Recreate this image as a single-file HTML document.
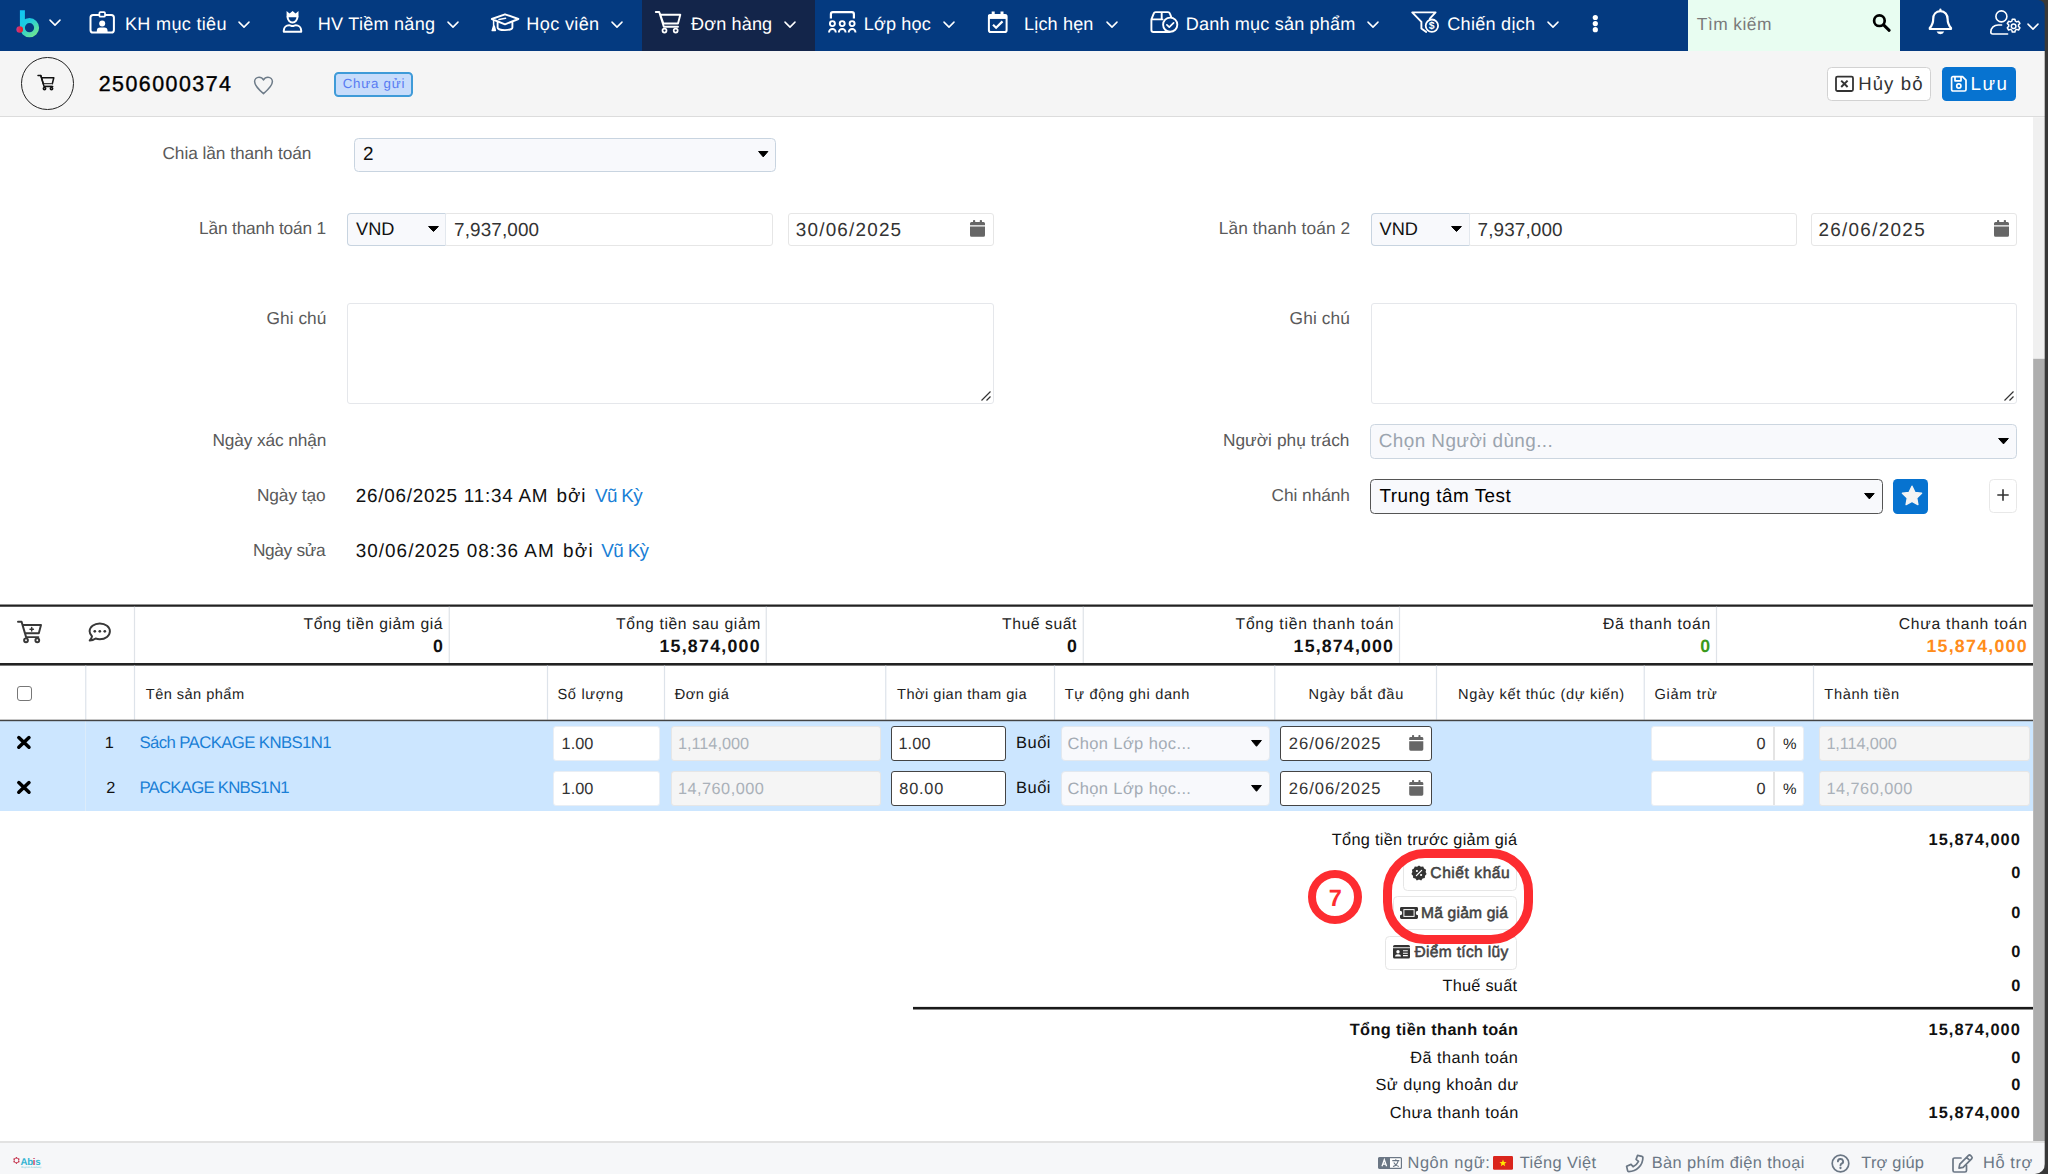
<!DOCTYPE html>
<html lang="vi">
<head>
<meta charset="utf-8">
<title>2506000374</title>
<style>
*{box-sizing:border-box;margin:0;padding:0}
html,body{width:2048px;height:1174px;overflow:hidden;background:#fff}
body{position:relative;font-family:"Liberation Sans",sans-serif;color:#222;-webkit-font-smoothing:antialiased;text-rendering:geometricPrecision}
.a{position:absolute}
.t{position:absolute;white-space:nowrap;line-height:1}
svg{position:absolute;overflow:visible}
/* nav */
#nav{position:absolute;left:0;top:0;width:2045px;height:50.6px;background:#043a80;border-top-right-radius:7px}
#nav .t{color:#fff;font-size:17.6px;top:15.6px;letter-spacing:.3px}
#nav .ch{position:absolute;top:20.7px;width:14px;height:8px}
#navact{position:absolute;left:642px;top:0;width:173px;height:50.6px;background:#13254a}
#search{position:absolute;left:1688px;top:0;width:212px;height:50.6px;background:#e8fdf1}
/* sub header */
#sub{position:absolute;left:0;top:50.6px;width:2045px;height:66.6px;background:#f5f5f5;border-bottom:1.5px solid #dcdcdc}
/* scrollbar + edge */
#sbtrack{position:absolute;left:2033px;top:117px;width:12px;height:1024px;background:#f0f0f0}
#sbthumb{position:absolute;left:2033px;top:358.800px;width:12px;height:782px;background:#aeaeae}
#edge{position:absolute;left:2044.800px;top:0;width:3.200px;height:1174px;background:#383838}
/* footer */
#footer{position:absolute;left:0;top:1141px;width:2045px;height:33px;background:#f6f7f9;border-top:2px solid #e2e2e2;border-bottom-right-radius:10px}
#footer .t{color:#6b7785;font-size:16.6px;top:12.5px}
/* form */
.lbl{color:#555;font-size:16.4px}
.inp{position:absolute;background:#fff;border:1.5px solid #e4e4e4;border-radius:3px}
.sel{position:absolute;background:#f8f9fc;border:1.5px solid #c9d3e0;border-radius:4px}
.val{color:#333;font-size:18px}
</style>
</head>
<body>
<!-- NAV -->
<div class="a" style="left:2030px;top:0;width:18px;height:12px;background:#383838"></div>
<div class="a" style="left:2030px;top:1160px;width:18px;height:14px;background:#383838"></div>
<div id="nav">
<div id="navact"></div>
<div id="search"></div>
<!--NAVITEMS-->
<svg class="ch" style="left:48px;top:19.1px" viewBox="0 0 14 8"><path d="M2 1.1 L7 6.1 L12 1.1" fill="none" stroke="#fff" stroke-width="1.5" stroke-linecap="round" stroke-linejoin="round"/></svg>
<svg class="ch" style="left:237.2px" viewBox="0 0 14 8"><path d="M2 1.1 L7 6.1 L12 1.1" fill="none" stroke="#fff" stroke-width="1.5" stroke-linecap="round" stroke-linejoin="round"/></svg>
<svg class="ch" style="left:445.7px" viewBox="0 0 14 8"><path d="M2 1.1 L7 6.1 L12 1.1" fill="none" stroke="#fff" stroke-width="1.5" stroke-linecap="round" stroke-linejoin="round"/></svg>
<svg class="ch" style="left:610.2px" viewBox="0 0 14 8"><path d="M2 1.1 L7 6.1 L12 1.1" fill="none" stroke="#fff" stroke-width="1.5" stroke-linecap="round" stroke-linejoin="round"/></svg>
<svg class="ch" style="left:783.2px" viewBox="0 0 14 8"><path d="M2 1.1 L7 6.1 L12 1.1" fill="none" stroke="#fff" stroke-width="1.5" stroke-linecap="round" stroke-linejoin="round"/></svg>
<svg class="ch" style="left:942.2px" viewBox="0 0 14 8"><path d="M2 1.1 L7 6.1 L12 1.1" fill="none" stroke="#fff" stroke-width="1.5" stroke-linecap="round" stroke-linejoin="round"/></svg>
<svg class="ch" style="left:1105.2px" viewBox="0 0 14 8"><path d="M2 1.1 L7 6.1 L12 1.1" fill="none" stroke="#fff" stroke-width="1.5" stroke-linecap="round" stroke-linejoin="round"/></svg>
<svg class="ch" style="left:1366.2px" viewBox="0 0 14 8"><path d="M2 1.1 L7 6.1 L12 1.1" fill="none" stroke="#fff" stroke-width="1.5" stroke-linecap="round" stroke-linejoin="round"/></svg>
<svg class="ch" style="left:1546.2px" viewBox="0 0 14 8"><path d="M2 1.1 L7 6.1 L12 1.1" fill="none" stroke="#fff" stroke-width="1.5" stroke-linecap="round" stroke-linejoin="round"/></svg>
<svg class="ch" style="left:2025.5px;top:22.8px" viewBox="0 0 14 8"><path d="M2 1.1 L7 6.1 L12 1.1" fill="none" stroke="#fff" stroke-width="1.5" stroke-linecap="round" stroke-linejoin="round"/></svg>
<!--/NAVITEMS-->
<!--NAVICONS-->
<svg id="navsvg" width="2048" height="51" viewBox="0 0 2048 51" style="left:0;top:0" fill="none" stroke="#fff" stroke-width="2" stroke-linecap="round" stroke-linejoin="round">
<defs>
<linearGradient id="lg1" x1="20" y1="10" x2="40" y2="34" gradientUnits="userSpaceOnUse"><stop offset="0" stop-color="#10c4f4"/><stop offset=".45" stop-color="#1ccbe0"/><stop offset="1" stop-color="#7aea86"/></linearGradient>
<linearGradient id="lg2" x1="16" y1="29" x2="23" y2="29" gradientUnits="userSpaceOnUse"><stop offset="0" stop-color="#c83c90"/><stop offset="1" stop-color="#f01818"/></linearGradient>
</defs>
<!-- logo b -->
<path d="M22.4 10.2 V27.7 A7.1 7.1 0 1 0 29.5 20.6 A7.1 7.1 0 0 0 22.4 27.7" stroke="url(#lg1)" stroke-width="5" stroke-linecap="butt"/>
<circle cx="19.7" cy="29.5" r="3.3" fill="url(#lg2)" stroke="none"/>
<!-- id badge -->
<rect x="90.5" y="15" width="23.4" height="17.6" rx="2.6"/>
<rect x="99.4" y="12.1" width="5.6" height="4.6" rx="1" fill="#043a80" stroke-width="1.7"/>
<circle cx="102.2" cy="23.4" r="3" fill="#fff" stroke="none"/>
<path d="M96.8 32.6 v-1.6 a3.4 3.4 0 0 1 3.4 -3.4 h4 a3.4 3.4 0 0 1 3.4 3.4 v1.6 z" fill="#fff" stroke="none"/>
<!-- user crown -->
<path d="M286.6 11 l3 2.4 l3 -2.4 l3 2.4 l2.9 -2.4 v6.2 h-11.9 z" fill="#fff" stroke="none"/>
<path d="M287.6 17 a4.9 5.4 0 0 0 9.8 0" />
<path d="M283.8 31.8 v-1.2 c0 -3.4 2.6 -5.4 5.4 -5.4 c1.2 0 1.8 .8 3.3 .8 c1.500 0 2.100 -.8 3.300 -.8 c2.800 0 5.400 2 5.400 5.400 v1.200 z"/>
<!-- graduation cap -->
<path d="M505 14.300 L518.400 19 L505 24.300 L491.800 19 Z" stroke-width="1.900"/>
<path d="M497.600 22.400 v5 c0 1.500 3.300 2.700 7.400 2.700 s7.400 -1.200 7.400 -2.700 v-5" stroke-width="1.900"/>
<path d="M499 19.600 l6.600 -1.300" stroke-width="1.500"/>
<path d="M493.600 20 v6 l-1.400 4.600 h3.200 l-1.200 -4.600" stroke-width="1.500" fill="#fff"/>
<!-- cart -->
<path d="M655.800 12 h3.400 l1.100 2.700 M660.300 14.700 h20 l-2.300 8.800 h-14.600 z M659.200 12 l4.600 14.700 h14.200" stroke-width="1.900"/>
<circle cx="664.500" cy="30.600" r="2" stroke-width="1.700"/><circle cx="675.700" cy="30.600" r="2" stroke-width="1.700"/>
<!-- class -->
<path d="M830.900 18.600 v-4.400 a2 2 0 0 1 2 -2 h19 a2 2 0 0 1 2 2 v4.400" stroke-width="2.200" stroke-linecap="butt"/>
<circle cx="832.400" cy="23.600" r="2.500" stroke-width="1.900"/><circle cx="842.200" cy="23.600" r="2.500" stroke-width="1.900"/><circle cx="852.100" cy="23.600" r="2.500" stroke-width="1.900"/>
<path d="M829 32.400 a3.400 3.400 0 0 1 6.800 0 M838.800 32.400 a3.400 3.400 0 0 1 6.800 0 M848.700 32.400 a3.400 3.400 0 0 1 6.800 0" stroke-width="1.900" stroke-linecap="butt"/>
<!-- calendar check -->
<rect x="988.900" y="15" width="17.700" height="17" rx="1.800"/>
<path d="M988.900 15 h17.700 v3.400 h-17.700 z" fill="#fff" stroke-width="1"/>
<path d="M993.200 11.600 v3 M1002 11.600 v3" stroke-width="3" stroke-linecap="butt"/>
<path d="M993 24.800 l3.100 3 l6.400 -6.400" stroke-width="2.200" stroke-linecap="butt" stroke-linejoin="miter"/>
<!-- box check -->
<path d="M1151.400 19.400 l2.400 -6 a2 2 0 0 1 1.800 -1.300 h12.400 a2 2 0 0 1 1.800 1.300 l1.600 4 M1151.400 19.400 v10.600 a2 2 0 0 0 2 2 h16 M1151.400 19.400 h11.200 M1161.700 12.100 v7.300" stroke-width="1.900"/>
<circle cx="1170.200" cy="24.700" r="7.100" stroke-width="1.900" fill="#043a80"/>
<path d="M1166.900 24.900 l2.400 2.300 l4.300 -4.300" stroke-width="1.700"/>
<!-- funnel dollar -->
<path d="M1426.200 32 l-4.800 -3.600 v-6.600 l-9.200 -9.400 h23.400 l-5.800 6.200" stroke-width="1.900"/>
<circle cx="1431.900" cy="25.700" r="6.200" stroke-width="1.800"/>
<!-- dots -->
<circle cx="1595.300" cy="17.500" r="2.600" fill="#fff" stroke="none"/><circle cx="1595.300" cy="23.600" r="2.600" fill="#fff" stroke="none"/><circle cx="1595.300" cy="29.700" r="2.600" fill="#fff" stroke="none"/>
<!-- search -->
<circle cx="1879.400" cy="20.700" r="5.300" stroke="#000" stroke-width="2.700"/>
<path d="M1883.600 24.900 l5.600 5.400" stroke="#000" stroke-width="3" />
<!-- bell -->
<path d="M1940.400 9.600 v1.600 M1940.400 11.200 c-4.600 0 -7.200 3.400 -7.200 7.800 c0 4.600 -1.600 7 -3.400 9 v1 h21.200 v-1 c-1.800 -2 -3.400 -4.400 -3.400 -9 c0 -4.400 -2.600 -7.800 -7.200 -7.800 z" stroke-width="2.200"/>
<path d="M1936.600 31.600 a4 3.800 0 0 0 7.600 0 z" fill="#fff" stroke="none"/>
<!-- user gear -->
<circle cx="2001.400" cy="16.400" r="5.500" stroke-width="1.600"/>
<path d="M2007.600 34 h-14.800 a2 2 0 0 1 -2 -2 c0 -4.400 3.400 -7 7.400 -7 h3.400" stroke-width="1.600"/>
<circle cx="2013.600" cy="26.200" r="2.300" stroke-width="1.500"/>
<path d="M2012.300 19.300 h2.600 l.5 1.900 l1.300 .7 l1.900 -.6 l1.300 2.200 l-1.400 1.400 v1.500 l1.400 1.400 l-1.300 2.200 l-1.900 -.6 l-1.300 .7 l-.5 1.900 h-2.600 l-.5 -1.900 l-1.300 -.7 l-1.900 .6 l-1.300 -2.200 l1.400 -1.400 v-1.500 l-1.400 -1.400 l1.300 -2.200 l1.900 .6 l1.300 -.7 z" stroke-width="1.500"/>
</svg>
<span class="t" style="left:1428.700px;top:20.600px;font-size:10.500px;font-weight:bold;color:#fff;letter-spacing:0">$</span>
<!--/NAVICONS-->
</div>
<!-- SUBHEADER -->
<div id="sub">
<div class="a" id="circ" style="left:21.200px;top:6.200px;width:52.800px;height:52.800px;border:1.800px solid #222;border-radius:50%"></div>
<svg width="20" height="18" viewBox="36 74 20 18" style="left:36px;top:23.400px" fill="none" stroke="#111" stroke-width="1.500" stroke-linejoin="round" stroke-linecap="round">
<path d="M38 75.600 h2.800 l.7 2.200 M41.500 77.800 h12.300 l-1.500 6 h-9 z" />
<path d="M42.900 83.800 h9.400 l-.5 2.200 h-8.300 z" fill="#ccc" stroke="none"/>
<path d="M40.800 75.600 l3.300 11 h8.600" />
<circle cx="44.500" cy="88.600" r="1.200"/><circle cx="51.500" cy="88.600" r="1.200"/>
</svg>
<svg width="22" height="20" viewBox="0 0 22 20" style="left:253px;top:24.400px" fill="none" stroke="#6d7b88" stroke-width="1.500" stroke-linejoin="round"><path d="M10.500 18.600 C4 13.200 1.600 10 1.600 6.600 A4.400 4.400 0 0 1 6 2.200 C8 2.200 9.600 3.300 10.500 5 C11.400 3.300 13 2.200 15 2.200 A4.400 4.400 0 0 1 19.400 6.600 C19.400 10 17 13.200 10.500 18.600 Z"/></svg>
<div class="a" id="badge" style="left:334px;top:21.400px;width:79px;height:25px;border:2px solid #3f9bd8;border-radius:4.500px;background:#c7dcfb"></div>
<div class="a" id="btn1" style="left:1827px;top:16.900px;width:104px;height:34px;border:1.500px solid #d2d2d2;border-radius:4.500px;background:#fff"></div>
<svg width="20" height="18" viewBox="0 0 20 18" style="left:1835px;top:24.400px" fill="none" stroke="#333" stroke-width="1.800"><rect x="1" y="1.600" width="17" height="14.400" rx="1.500"/><path d="M6.200 5.600 l6.400 6.400 M12.600 5.600 l-6.400 6.400" stroke-width="2"/></svg>
<div class="a" id="btn2" style="left:1941.500px;top:16.400px;width:74px;height:34.500px;border-radius:4.500px;background:#0773d0"></div>
<svg width="18" height="18" viewBox="0 0 18 18" style="left:1949.500px;top:24.400px" fill="none" stroke="#fff" stroke-width="1.700" stroke-linejoin="round"><path d="M1.600 3 a1.400 1.400 0 0 1 1.400 -1.400 h9.500 l3.500 3.500 v9.500 a1.400 1.400 0 0 1 -1.400 1.400 h-11.600 a1.400 1.400 0 0 1 -1.400 -1.400 z"/><path d="M5 1.800 v4 h6 v-4"/><circle cx="8.800" cy="11" r="2.100"/></svg>
</div>
<!-- CONTENT -->
<div id="content">
<div class="a" style="left:354.00px;top:137.50px;width:422.00px;height:34.25px;background:#f8f9fc;border:1.5px solid #c8d4e0;border-radius:4.5px;"></div>
<svg width="10.5" height="6.2" viewBox="0 0 10.5 6.2" style="left:758.00px;top:151.30px"><path d="M0.6 0.5 H9.9 L5.25 5.9 Z" fill="#000" stroke="#000" stroke-width="1" stroke-linejoin="round"/></svg>
<div class="a" style="left:444.00px;top:212.50px;width:328.50px;height:33.75px;background:#fff;border:1.5px solid #e6e6e6;border-radius:3px;"></div>
<div class="a" style="left:347.00px;top:212.50px;width:99.00px;height:33.75px;background:#f8f9fc;border:1.5px solid #c8d4e0;border-radius:4px;border-right-color:#e3e8ee;border-top-right-radius:0;border-bottom-right-radius:0;"></div>
<svg width="11" height="5.8" viewBox="0 0 11 5.8" style="left:427.70px;top:226.20px"><path d="M0.6 0.5 H10.4 L5.5 5.5 Z" fill="#000" stroke="#000" stroke-width="1" stroke-linejoin="round"/></svg>
<div class="a" style="left:787.50px;top:212.50px;width:206.00px;height:33.75px;background:#fff;border:1.5px solid #e6e6e6;border-radius:3px;"></div>
<svg width="15" height="16.75" viewBox="0 0 15 16.75" style="left:970.00px;top:220.00px" fill="#666"><path d="M0 6.600 h15 v8.650 a1.500 1.500 0 0 1 -1.500 1.500 h-12 a1.500 1.500 0 0 1 -1.500 -1.500 z M0 5.300 v-1.800 a1.500 1.500 0 0 1 1.500 -1.500 h12 a1.500 1.500 0 0 1 1.500 1.500 v1.800 z"/><rect x="3" y="0" width="2.200" height="4" rx=".8"/><rect x="9.800" y="0" width="2.200" height="4" rx=".8"/></svg>
<div class="a" style="left:347.25px;top:302.50px;width:646.25px;height:101.25px;background:#fff;border:1.5px solid #e5e7eb;border-radius:3px;"></div>
<svg width="12" height="12" viewBox="0 0 12 12" style="left:979.50px;top:389.500px" stroke="#333" stroke-width="1.200" fill="none"><path d="M1.500 10.500 L10.500 1.500 M6.500 10.500 L10.500 6.500"/></svg>
<div class="a" style="left:1467.50px;top:212.50px;width:329.00px;height:33.75px;background:#fff;border:1.5px solid #e6e6e6;border-radius:3px;"></div>
<div class="a" style="left:1370.50px;top:212.50px;width:99.00px;height:33.75px;background:#f8f9fc;border:1.5px solid #c8d4e0;border-radius:4px;border-right-color:#e3e8ee;border-top-right-radius:0;border-bottom-right-radius:0;"></div>
<svg width="11" height="5.8" viewBox="0 0 11 5.8" style="left:1451.20px;top:226.20px"><path d="M0.6 0.5 H10.4 L5.5 5.5 Z" fill="#000" stroke="#000" stroke-width="1" stroke-linejoin="round"/></svg>
<div class="a" style="left:1811.00px;top:212.50px;width:206.00px;height:33.75px;background:#fff;border:1.5px solid #e6e6e6;border-radius:3px;"></div>
<svg width="15" height="16.75" viewBox="0 0 15 16.75" style="left:1993.50px;top:220.00px" fill="#666"><path d="M0 6.600 h15 v8.650 a1.500 1.500 0 0 1 -1.500 1.500 h-12 a1.500 1.500 0 0 1 -1.500 -1.500 z M0 5.300 v-1.800 a1.500 1.500 0 0 1 1.500 -1.500 h12 a1.500 1.500 0 0 1 1.500 1.500 v1.800 z"/><rect x="3" y="0" width="2.200" height="4" rx=".8"/><rect x="9.800" y="0" width="2.200" height="4" rx=".8"/></svg>
<div class="a" style="left:1370.75px;top:302.50px;width:646.25px;height:101.25px;background:#fff;border:1.5px solid #e5e7eb;border-radius:3px;"></div>
<svg width="12" height="12" viewBox="0 0 12 12" style="left:2003.00px;top:389.500px" stroke="#333" stroke-width="1.200" fill="none"><path d="M1.500 10.500 L10.500 1.500 M6.500 10.500 L10.500 6.500"/></svg>
<div class="a" style="left:1370.00px;top:424.25px;width:647.00px;height:34.25px;background:#f8f9fc;border:1.5px solid #ccd6e0;border-radius:4.5px;"></div>
<svg width="11" height="6.2" viewBox="0 0 11 6.2" style="left:1997.80px;top:438.20px"><path d="M0.6 0.5 H10.4 L5.5 5.9 Z" fill="#000" stroke="#000" stroke-width="1" stroke-linejoin="round"/></svg>
<div class="a" style="left:1370.00px;top:478.50px;width:513.00px;height:35.00px;background:#f8f9fc;border:1.5px solid #555;border-radius:4.5px;"></div>
<svg width="10.8" height="6.2" viewBox="0 0 10.8 6.2" style="left:1864.00px;top:492.60px"><path d="M0.6 0.5 H10.200000000000001 L5.4 5.9 Z" fill="#000" stroke="#000" stroke-width="1" stroke-linejoin="round"/></svg>
<div class="a" style="left:1893.00px;top:478.50px;width:34.60px;height:35.00px;background:#0773d0;border-radius:4.5px;"></div>
<svg width="22" height="21" viewBox="0 0 22 21" style="left:1901px;top:485px"><path d="M11 1.200 L13.900 7.400 L20.600 8.200 L15.700 12.900 L16.900 19.600 L11 16.300 L5.100 19.600 L6.300 12.900 L1.400 8.200 L8.100 7.400 Z" fill="#f4f4f4" stroke="#f4f4f4" stroke-width="1.400" stroke-linejoin="round"/></svg>
<div class="a" style="left:1988.50px;top:479.00px;width:28.50px;height:34.00px;background:#fff;border:1.5px solid #e8e8e8;border-radius:4.5px;"></div>
<svg width="14" height="14" viewBox="0 0 14 14" style="left:1995.600px;top:488.250px" stroke="#333" stroke-width="1.600"><path d="M7 1.300 V12.700 M1.300 7 H12.700"/></svg>
<svg width="26" height="24" viewBox="17 620 26 24" style="left:17px;top:620px" fill="none" stroke="#383838" stroke-width="1.950" stroke-linecap="round" stroke-linejoin="round">
<path d="M18 621.800 h3.600 l.9 3.100 M22.500 624.900 h18.500 l-2.200 8.300 h-13.900 z M21.600 621.800 l4.500 15.300 h12.300"/>
<circle cx="26" cy="640.300" r="1.900"/><circle cx="37.300" cy="640.300" r="1.900"/>
<path d="M31.700 627.500 v3.400 M30 629.200 h3.400" stroke-width="1.500"/></svg>
<svg width="24" height="21" viewBox="88 622 24 21" style="left:88px;top:622px" fill="none" stroke="#383838" stroke-width="1.950" stroke-linejoin="round">
<path d="M99.800 623.400 c5.700 0 10.100 3.500 10.100 7.900 s-4.400 7.900 -10.100 7.900 c-1.500 0 -2.900 -.25 -4.200 -.7 c-1.500 1.100 -3.600 2 -5.900 2 c1.300 -1.300 2.100 -2.800 2.300 -4.200 c-1.500 -1.400 -2.400 -3.100 -2.400 -5 c0 -4.400 4.500 -7.900 10.200 -7.900 z"/>
<circle cx="94.800" cy="631.300" r="1.350" fill="#383838" stroke="none"/><circle cx="99.800" cy="631.300" r="1.350" fill="#383838" stroke="none"/><circle cx="104.800" cy="631.300" r="1.350" fill="#383838" stroke="none"/></svg>
<div class="a" style="left:16.75px;top:685.75px;width:15.00px;height:14.75px;background:#fff;border:1.5px solid #777;border-radius:3px;"></div>
<div class="a" style="left:0.00px;top:721.20px;width:2033.00px;height:89.80px;background:#cce6ff;"></div>
<div class="a" style="left:85.20px;top:721.20px;width:1.20px;height:89.80px;background:#dcecfa;"></div>
<svg width="16" height="15" viewBox="0 0 16 15" style="left:15.900px;top:734.70px" stroke="#000" stroke-width="3.500" stroke-linecap="round"><path d="M2.800 2.600 L13 12.200 M13 2.600 L2.800 12.200"/></svg>
<div class="a" style="left:553.25px;top:726.25px;width:106.75px;height:34.25px;background:#fff;border:1.5px solid #e9eef4;border-radius:3px;"></div>
<div class="a" style="left:670.50px;top:726.25px;width:210.75px;height:34.25px;background:#f5f5f5;border:1.5px solid #e6e6e6;border-radius:3px;"></div>
<div class="a" style="left:891.25px;top:725.75px;width:115.00px;height:35.00px;background:#fff;border:1.5px solid #444;border-radius:3px;"></div>
<div class="a" style="left:1060.50px;top:726.25px;width:209.00px;height:34.25px;background:#f8f9fc;border:1.5px solid #e2e8ef;border-radius:4px;"></div>
<svg width="11" height="6.6" viewBox="0 0 11 6.6" style="left:1251.30px;top:740.00px"><path d="M0.6 0.5 H10.4 L5.5 6.3 Z" fill="#000" stroke="#000" stroke-width="1" stroke-linejoin="round"/></svg>
<div class="a" style="left:1280.00px;top:725.75px;width:151.75px;height:35.00px;background:#fff;border:1.5px solid #444;border-radius:3px;"></div>
<svg width="14.5" height="15.75" viewBox="0 0 15 16.75" style="left:1408.75px;top:735.00px" fill="#666"><path d="M0 6.600 h15 v8.650 a1.500 1.500 0 0 1 -1.500 1.500 h-12 a1.500 1.500 0 0 1 -1.500 -1.500 z M0 5.300 v-1.800 a1.500 1.500 0 0 1 1.500 -1.500 h12 a1.500 1.500 0 0 1 1.500 1.500 v1.800 z"/><rect x="3" y="0" width="2.200" height="4" rx=".8"/><rect x="9.800" y="0" width="2.200" height="4" rx=".8"/></svg>
<div class="a" style="left:1650.50px;top:726.25px;width:153.50px;height:34.25px;background:#fff;border:1.5px solid #e9eef4;border-radius:3px;"></div>
<div class="a" style="left:1773.40px;top:727.25px;width:1.20px;height:32.25px;background:#e4e4e4;"></div>
<div class="a" style="left:1819.00px;top:726.25px;width:210.75px;height:34.25px;background:#f5f5f5;border:1.5px solid #e6e6e6;border-radius:3px;"></div>
<svg width="16" height="15" viewBox="0 0 16 15" style="left:15.900px;top:779.70px" stroke="#000" stroke-width="3.500" stroke-linecap="round"><path d="M2.800 2.600 L13 12.200 M13 2.600 L2.800 12.200"/></svg>
<div class="a" style="left:553.25px;top:771.25px;width:106.75px;height:34.25px;background:#fff;border:1.5px solid #e9eef4;border-radius:3px;"></div>
<div class="a" style="left:670.50px;top:771.25px;width:210.75px;height:34.25px;background:#f5f5f5;border:1.5px solid #e6e6e6;border-radius:3px;"></div>
<div class="a" style="left:891.25px;top:770.75px;width:115.00px;height:35.00px;background:#fff;border:1.5px solid #444;border-radius:3px;"></div>
<div class="a" style="left:1060.50px;top:771.25px;width:209.00px;height:34.25px;background:#f8f9fc;border:1.5px solid #e2e8ef;border-radius:4px;"></div>
<svg width="11" height="6.6" viewBox="0 0 11 6.6" style="left:1251.30px;top:785.00px"><path d="M0.6 0.5 H10.4 L5.5 6.3 Z" fill="#000" stroke="#000" stroke-width="1" stroke-linejoin="round"/></svg>
<div class="a" style="left:1280.00px;top:770.75px;width:151.75px;height:35.00px;background:#fff;border:1.5px solid #444;border-radius:3px;"></div>
<svg width="14.5" height="15.75" viewBox="0 0 15 16.75" style="left:1408.75px;top:780.00px" fill="#666"><path d="M0 6.600 h15 v8.650 a1.500 1.500 0 0 1 -1.500 1.500 h-12 a1.500 1.500 0 0 1 -1.500 -1.500 z M0 5.300 v-1.800 a1.500 1.500 0 0 1 1.500 -1.500 h12 a1.500 1.500 0 0 1 1.500 1.500 v1.800 z"/><rect x="3" y="0" width="2.200" height="4" rx=".8"/><rect x="9.800" y="0" width="2.200" height="4" rx=".8"/></svg>
<div class="a" style="left:1650.50px;top:771.25px;width:153.50px;height:34.25px;background:#fff;border:1.5px solid #e9eef4;border-radius:3px;"></div>
<div class="a" style="left:1773.40px;top:772.25px;width:1.20px;height:32.25px;background:#e4e4e4;"></div>
<div class="a" style="left:1819.00px;top:771.25px;width:210.75px;height:34.25px;background:#f5f5f5;border:1.5px solid #e6e6e6;border-radius:3px;"></div>
<div class="a" style="left:1403.00px;top:856.00px;width:114.00px;height:34.50px;background:#fff;border:1.5px solid #e6e6e6;border-radius:4.5px;"></div>
<div class="a" style="left:1392.70px;top:895.60px;width:124.30px;height:34.40px;background:#fff;border:1.5px solid #e6e6e6;border-radius:4.5px;"></div>
<div class="a" style="left:1384.70px;top:936.00px;width:132.30px;height:33.60px;background:#fff;border:1.5px solid #e6e6e6;border-radius:4.5px;"></div>
<svg width="16" height="16" viewBox="0 0 16 16" style="left:1410.800px;top:865.400px"><path d="M8 .4 l1.900 1.300 l2.300 -.2 l.9 2.100 l2 1.100 l-.5 2.300 l1 2.100 l-1.600 1.600 l-.2 2.300 l-2.200 .6 l-1.400 1.800 l-2.200 -.8 l-2.200 .8 l-1.400 -1.800 l-2.200 -.6 l-.2 -2.300 l-1.600 -1.600 l1 -2.100 l-.5 -2.300 l2 -1.100 l.9 -2.100 l2.300 .2 z" fill="#333"/><path d="M5.400 10.600 L10.600 5.400" stroke="#fff" stroke-width="1.300" stroke-linecap="round"/><circle cx="5.900" cy="6" r="1.100" fill="#fff"/><circle cx="10.100" cy="10" r="1.100" fill="#fff"/></svg>
<svg width="18" height="12" viewBox="0 0 18 12" style="left:1400.200px;top:906.600px"><path d="M1.400 0 h15.200 a1.400 1.400 0 0 1 1.400 1.400 v2.400 a2.200 2.200 0 0 0 0 4.400 v2.400 a1.400 1.400 0 0 1 -1.400 1.400 h-15.200 a1.400 1.400 0 0 1 -1.400 -1.400 v-2.400 a2.200 2.200 0 0 0 0 -4.400 v-2.400 a1.400 1.400 0 0 1 1.400 -1.400 z" fill="#333"/><rect x="3.900" y="2.600" width="10.200" height="6.800" fill="none" stroke="#fff" stroke-width="1"/></svg>
<svg width="17" height="13.500" viewBox="0 0 17 13.500" style="left:1393px;top:945.200px"><rect x="0" y="0" width="17" height="13.500" rx="1.600" fill="#333"/><rect x="0" y="2.300" width="17" height=".9" fill="#fff"/><circle cx="5" cy="6.700" r="1.700" fill="#fff"/><path d="M2.100 11.600 a2.900 2.400 0 0 1 5.800 0 z" fill="#fff"/><path d="M10 5.800 h4.800 M10 8.200 h4.800 M10 10.600 h4.800" stroke="#fff" stroke-width="1.100"/></svg>
<div class="a" style="left:1308px;top:870px;width:54px;height:54px;border:8.700px solid #fd2c30;border-radius:50%"></div>
<div class="a" style="left:1383.200px;top:849px;width:150px;height:95px;border:9.300px solid #fd2c30;border-radius:42px"></div>
<svg width="2048" height="1174" viewBox="0 0 2048 1174" style="left:0;top:0;pointer-events:none"><rect x="0.00" y="604.50" width="2033.00" height="2.25" fill="#222"/><rect x="0.00" y="663.00" width="2033.00" height="2.60" fill="#222"/><rect x="133.90" y="606.75" width="1.20" height="56.25" fill="#dfe3e8"/><rect x="448.65" y="606.75" width="1.20" height="56.25" fill="#dfe3e8"/><rect x="765.65" y="606.75" width="1.20" height="56.25" fill="#dfe3e8"/><rect x="1082.65" y="606.75" width="1.20" height="56.25" fill="#dfe3e8"/><rect x="1398.90" y="606.75" width="1.20" height="56.25" fill="#dfe3e8"/><rect x="1715.90" y="606.75" width="1.20" height="56.25" fill="#dfe3e8"/><rect x="85.15" y="665.60" width="1.20" height="54.10" fill="#dde3ea"/><rect x="133.90" y="665.60" width="1.20" height="54.10" fill="#dde3ea"/><rect x="546.90" y="665.60" width="1.20" height="54.10" fill="#dde3ea"/><rect x="663.90" y="665.60" width="1.20" height="54.10" fill="#dde3ea"/><rect x="885.15" y="665.60" width="1.20" height="54.10" fill="#dde3ea"/><rect x="1053.90" y="665.60" width="1.20" height="54.10" fill="#dde3ea"/><rect x="1274.15" y="665.60" width="1.20" height="54.10" fill="#dde3ea"/><rect x="1435.90" y="665.60" width="1.20" height="54.10" fill="#dde3ea"/><rect x="1643.65" y="665.60" width="1.20" height="54.10" fill="#dde3ea"/><rect x="1812.90" y="665.60" width="1.20" height="54.10" fill="#dde3ea"/><rect x="0.00" y="719.70" width="2033.00" height="1.50" fill="#444"/><rect x="913.00" y="1006.90" width="1120.00" height="2.60" fill="#1a1a1a"/></svg>
<span class="t" id="nv0" style="left:124.94px;top:14.98px;font-size:18.1px;color:#fff;letter-spacing:0.306px;">KH mục tiêu</span>
<span class="t" id="nv1" style="left:317.70px;top:14.98px;font-size:18.1px;color:#fff;letter-spacing:0.246px;">HV Tiềm năng</span>
<span class="t" id="nv2" style="left:526.36px;top:14.98px;font-size:18.1px;color:#fff;letter-spacing:0.338px;">Học viên</span>
<span class="t" id="nv3" style="left:691.00px;top:14.98px;font-size:18.1px;color:#fff;letter-spacing:0.129px;">Đơn hàng</span>
<span class="t" id="nv4" style="left:863.78px;top:14.98px;font-size:18.1px;color:#fff;letter-spacing:0.120px;">Lớp học</span>
<span class="t" id="nv5" style="left:1024.10px;top:14.98px;font-size:18.1px;color:#fff;letter-spacing:0.129px;">Lịch hẹn</span>
<span class="t" id="nv6" style="left:1185.70px;top:14.98px;font-size:18.1px;color:#fff;letter-spacing:0.169px;">Danh mục sản phẩm</span>
<span class="t" id="nv7" style="left:1447.26px;top:14.98px;font-size:18.1px;color:#fff;letter-spacing:0.260px;">Chiến dịch</span>
<span class="t" id="srch" style="left:1696.84px;top:15.67px;font-size:17.4px;color:#7a7a7a;letter-spacing:0.441px;">Tìm kiếm</span>
<span class="t" id="title" style="left:98.68px;top:74.13px;font-size:21.4px;color:#000;letter-spacing:1.480px;-webkit-text-stroke:.4px #000;">2506000374</span>
<span class="t" id="badget" style="left:342.76px;top:76.94px;font-size:13.3px;color:#587bf2;letter-spacing:0.772px;">Chưa gửi</span>
<span class="t" id="btn1t" style="left:1858.20px;top:74.51px;font-size:18.6px;color:#333;letter-spacing:1.080px;">Hủy bỏ</span>
<span class="t" id="btn2t" style="left:1970.62px;top:75.34px;font-size:18.8px;color:#fff;letter-spacing:1.440px;">Lưu</span>
<span class="t" id="l1" style="left:162.40px;top:144.86px;font-size:17.3px;color:#5a5a5a;letter-spacing:-0.050px;">Chia lần thanh toán</span>
<span class="t" id="l2" style="left:199.10px;top:219.66px;font-size:17.3px;color:#5a5a5a;letter-spacing:-0.180px;">Lần thanh toán 1</span>
<span class="t" id="l3" style="left:266.60px;top:309.76px;font-size:17.3px;color:#5a5a5a;letter-spacing:0.030px;">Ghi chú</span>
<span class="t" id="l4" style="left:212.39px;top:431.61px;font-size:17.3px;color:#5a5a5a;letter-spacing:-0.117px;">Ngày xác nhận</span>
<span class="t" id="l5" style="left:256.89px;top:486.61px;font-size:17.3px;color:#5a5a5a;letter-spacing:-0.060px;">Ngày tạo</span>
<span class="t" id="l6" style="left:252.89px;top:542.11px;font-size:17.3px;color:#5a5a5a;letter-spacing:-0.321px;">Ngày sửa</span>
<span class="t" id="r2" style="left:1218.70px;top:219.66px;font-size:17.3px;color:#5a5a5a;letter-spacing:0.120px;">Lần thanh toán 2</span>
<span class="t" id="r3" style="left:1289.60px;top:309.76px;font-size:17.3px;color:#5a5a5a;letter-spacing:0.120px;">Ghi chú</span>
<span class="t" id="r4" style="left:1222.89px;top:431.61px;font-size:17.3px;color:#5a5a5a;letter-spacing:0.064px;">Người phụ trách</span>
<span class="t" id="r5" style="left:1271.60px;top:486.61px;font-size:17.3px;color:#5a5a5a;letter-spacing:-0.056px;">Chi nhánh</span>
<span class="t" id="v1" style="left:363.00px;top:146.00px;font-size:18.9px;color:#111;">2</span>
<span class="t" id="vnda" style="left:356.00px;top:219.79px;font-size:18.2px;color:#111;">VND</span>
<span class="t" id="amta" style="left:454.10px;top:221.50px;font-size:18.9px;color:#333;letter-spacing:0.112px;">7,937,000</span>
<span class="t" id="dta" style="left:795.79px;top:221.50px;font-size:18.9px;color:#333;letter-spacing:1.200px;">30/06/2025</span>
<span class="t" id="vndb" style="left:1379.50px;top:219.79px;font-size:18.2px;color:#111;">VND</span>
<span class="t" id="amtb" style="left:1477.60px;top:221.50px;font-size:18.9px;color:#333;letter-spacing:0.112px;">7,937,000</span>
<span class="t" id="dtb" style="left:1818.40px;top:221.50px;font-size:18.9px;color:#333;letter-spacing:1.300px;">26/06/2025</span>
<span class="t" id="d1" style="left:355.79px;top:488.00px;font-size:18.9px;color:#111;letter-spacing:0.750px;">26/06/2025 11:34 AM</span>
<span class="t" id="d1b" style="left:556.60px;top:488.00px;font-size:18.9px;color:#111;letter-spacing:0.900px;">bởi</span>
<span class="t" id="d1c" style="left:595.00px;top:488.00px;font-size:18.9px;color:#1a7fd6;letter-spacing:-0.676px;">Vũ Kỳ</span>
<span class="t" id="d2" style="left:355.79px;top:542.75px;font-size:18.9px;color:#111;letter-spacing:1.016px;">30/06/2025 08:36 AM</span>
<span class="t" id="d2b" style="left:562.89px;top:542.75px;font-size:18.9px;color:#111;letter-spacing:1.350px;">bởi</span>
<span class="t" id="d2c" style="left:601.32px;top:542.75px;font-size:18.9px;color:#1a7fd6;letter-spacing:-0.675px;">Vũ Kỳ</span>
<span class="t" id="ph1" style="left:1378.79px;top:433.30px;font-size:18.9px;color:#9ba4ae;letter-spacing:0.424px;">Chọn Người dùng...</span>
<span class="t" id="cn" style="left:1379.50px;top:488.00px;font-size:18.9px;color:#000;letter-spacing:0.485px;">Trung tâm Test</span>
<span class="t" id="s0" style="left:303.60px;top:617.46px;font-size:15.7px;color:#222;letter-spacing:0.582px;">Tổng tiền giảm giá</span>
<span class="t" id="sv0" style="left:432.90px;top:637.93px;font-size:17.8px;color:#111;font-weight:bold;">0</span>
<span class="t" id="s1" style="left:616.10px;top:617.46px;font-size:15.7px;color:#222;letter-spacing:0.635px;">Tổng tiền sau giảm</span>
<span class="t" id="sv1" style="left:659.40px;top:637.93px;font-size:17.8px;color:#111;font-weight:bold;letter-spacing:1.250px;">15,874,000</span>
<span class="t" id="s2" style="left:1002.10px;top:617.46px;font-size:15.7px;color:#222;letter-spacing:0.562px;">Thuế suất</span>
<span class="t" id="sv2" style="left:1067.05px;top:637.93px;font-size:17.8px;color:#111;font-weight:bold;">0</span>
<span class="t" id="s3" style="left:1235.60px;top:617.46px;font-size:15.7px;color:#222;letter-spacing:0.731px;">Tổng tiền thanh toán</span>
<span class="t" id="sv3" style="left:1293.60px;top:637.93px;font-size:17.8px;color:#111;font-weight:bold;letter-spacing:1.150px;">15,874,000</span>
<span class="t" id="s4" style="left:1603.00px;top:617.46px;font-size:15.7px;color:#222;letter-spacing:0.717px;">Đã thanh toán</span>
<span class="t" id="sv4" style="left:1700.35px;top:637.93px;font-size:17.8px;color:#3a9a1c;font-weight:bold;">0</span>
<span class="t" id="s5" style="left:1898.79px;top:617.46px;font-size:15.7px;color:#222;letter-spacing:0.739px;">Chưa thanh toán</span>
<span class="t" id="sv5" style="left:1926.40px;top:637.93px;font-size:17.8px;color:#ff8c1a;font-weight:bold;letter-spacing:1.250px;">15,874,000</span>
<span class="t" id="h0" style="left:145.79px;top:688.39px;font-size:14.6px;color:#222;letter-spacing:0.454px;">Tên sản phẩm</span>
<span class="t" id="h1" style="left:557.40px;top:688.39px;font-size:14.6px;color:#222;letter-spacing:0.707px;">Số lượng</span>
<span class="t" id="h2" style="left:674.79px;top:688.39px;font-size:14.6px;color:#222;letter-spacing:0.374px;">Đơn giá</span>
<span class="t" id="h3" style="left:897.00px;top:688.39px;font-size:14.6px;color:#222;letter-spacing:0.477px;">Thời gian tham gia</span>
<span class="t" id="h4" style="left:1064.79px;top:688.39px;font-size:14.6px;color:#222;letter-spacing:0.630px;">Tự động ghi danh</span>
<span class="t" id="h5" style="left:1308.40px;top:688.39px;font-size:14.6px;color:#222;letter-spacing:0.737px;">Ngày bắt đầu</span>
<span class="t" id="h6" style="left:1458.10px;top:688.39px;font-size:14.6px;color:#222;letter-spacing:0.654px;">Ngày kết thúc (dự kiến)</span>
<span class="t" id="h7" style="left:1654.60px;top:688.39px;font-size:14.6px;color:#222;letter-spacing:0.643px;">Giảm trừ</span>
<span class="t" id="h8" style="left:1824.32px;top:688.39px;font-size:14.6px;color:#222;letter-spacing:0.650px;">Thành tiền</span>
<span class="t" id="rn0" style="left:104.80px;top:734.60px;font-size:16.3px;color:#111;">1</span>
<span class="t" id="nm0" style="left:139.40px;top:735.18px;font-size:16.8px;color:#1a7fd6;letter-spacing:-0.616px;">Sách PACKAGE KNBS1N1</span>
<span class="t" id="q0" style="left:561.60px;top:736.00px;font-size:16.3px;color:#333;">1.00</span>
<span class="t" id="p0" style="left:677.89px;top:736.00px;font-size:16.3px;color:#aab1b9;letter-spacing:0.001px;">1,114,000</span>
<span class="t" id="du0" style="left:898.40px;top:736.00px;font-size:16.3px;color:#333;letter-spacing:0.150px;">1.00</span>
<span class="t" id="bu0" style="left:1016.10px;top:735.43px;font-size:16.5px;color:#111;letter-spacing:0.450px;">Buổi</span>
<span class="t" id="cl0" style="left:1067.40px;top:735.73px;font-size:16.5px;color:#a3abb4;letter-spacing:0.386px;">Chọn Lớp học...</span>
<span class="t" id="sd0" style="left:1288.79px;top:735.75px;font-size:16.6px;color:#333;letter-spacing:0.950px;">26/06/2025</span>
<span class="t" id="z0" style="left:1756.43px;top:736.00px;font-size:16.3px;color:#333;">0</span>
<span class="t" id="pc0" style="left:1783.00px;top:736.73px;font-size:15.2px;color:#222;">%</span>
<span class="t" id="t0" style="left:1826.40px;top:736.00px;font-size:16.3px;color:#aab1b9;letter-spacing:-0.112px;">1,114,000</span>
<span class="t" id="rn1" style="left:106.25px;top:779.60px;font-size:16.3px;color:#111;">2</span>
<span class="t" id="nm1" style="left:139.39px;top:780.18px;font-size:16.8px;color:#1a7fd6;letter-spacing:-0.771px;">PACKAGE KNBS1N1</span>
<span class="t" id="q1" style="left:561.60px;top:781.00px;font-size:16.3px;color:#333;">1.00</span>
<span class="t" id="p1" style="left:677.89px;top:781.00px;font-size:16.3px;color:#aab1b9;letter-spacing:0.500px;">14,760,000</span>
<span class="t" id="du1" style="left:899.32px;top:781.00px;font-size:16.3px;color:#333;letter-spacing:0.792px;">80.00</span>
<span class="t" id="bu1" style="left:1016.10px;top:780.43px;font-size:16.5px;color:#111;letter-spacing:0.450px;">Buổi</span>
<span class="t" id="cl1" style="left:1067.40px;top:780.73px;font-size:16.5px;color:#a3abb4;letter-spacing:0.386px;">Chọn Lớp học...</span>
<span class="t" id="sd1" style="left:1288.79px;top:780.75px;font-size:16.6px;color:#333;letter-spacing:0.950px;">26/06/2025</span>
<span class="t" id="z1" style="left:1756.43px;top:781.00px;font-size:16.3px;color:#333;">0</span>
<span class="t" id="pc1" style="left:1783.00px;top:781.73px;font-size:15.2px;color:#222;">%</span>
<span class="t" id="t1" style="left:1826.40px;top:781.00px;font-size:16.3px;color:#aab1b9;letter-spacing:0.500px;">14,760,000</span>
<span class="t" id="tl0" style="left:1331.84px;top:831.70px;font-size:16.3px;color:#111;letter-spacing:0.307px;">Tổng tiền trước giảm giá</span>
<span class="t" id="tv0" style="left:1928.60px;top:831.62px;font-size:16.4px;color:#111;font-weight:bold;letter-spacing:1.020px;">15,874,000</span>
<span class="t" id="tv1" style="left:2011.18px;top:865.12px;font-size:16.4px;color:#111;font-weight:bold;">0</span>
<span class="t" id="tv2" style="left:2011.18px;top:905.12px;font-size:16.4px;color:#111;font-weight:bold;">0</span>
<span class="t" id="tv3" style="left:2011.18px;top:944.32px;font-size:16.4px;color:#111;font-weight:bold;">0</span>
<span class="t" id="tl4" style="left:1442.50px;top:978.40px;font-size:16.3px;color:#111;letter-spacing:0.266px;">Thuế suất</span>
<span class="t" id="tv4" style="left:2011.18px;top:978.32px;font-size:16.4px;color:#111;font-weight:bold;">0</span>
<span class="t" id="tl5" style="left:1349.76px;top:1021.55px;font-size:16.3px;color:#111;font-weight:bold;letter-spacing:0.379px;">Tổng tiền thanh toán</span>
<span class="t" id="tv5" style="left:1928.60px;top:1022.47px;font-size:16.4px;color:#111;font-weight:bold;letter-spacing:1.020px;">15,874,000</span>
<span class="t" id="tl6" style="left:1410.34px;top:1050.30px;font-size:16.3px;color:#111;letter-spacing:0.435px;">Đã thanh toán</span>
<span class="t" id="tv6" style="left:2011.18px;top:1050.22px;font-size:16.4px;color:#111;font-weight:bold;">0</span>
<span class="t" id="tl7" style="left:1375.52px;top:1076.50px;font-size:16.3px;color:#111;letter-spacing:0.456px;">Sử dụng khoản dư</span>
<span class="t" id="tv7" style="left:2011.18px;top:1077.42px;font-size:16.4px;color:#111;font-weight:bold;">0</span>
<span class="t" id="tl8" style="left:1389.76px;top:1104.90px;font-size:16.3px;color:#111;letter-spacing:0.451px;">Chưa thanh toán</span>
<span class="t" id="tv8" style="left:1928.60px;top:1104.82px;font-size:16.4px;color:#111;font-weight:bold;letter-spacing:1.020px;">15,874,000</span>
<span class="t" id="b0" style="left:1430.34px;top:866.04px;font-size:15.6px;color:#444;letter-spacing:0.540px;-webkit-text-stroke:.55px #444;">Chiết khấu</span>
<span class="t" id="b1" style="left:1421.02px;top:905.89px;font-size:15.6px;color:#444;letter-spacing:0.198px;-webkit-text-stroke:.55px #444;">Mã giảm giá</span>
<span class="t" id="b2" style="left:1414.50px;top:944.99px;font-size:15.6px;color:#444;letter-spacing:0.300px;-webkit-text-stroke:.55px #444;">Điểm tích lũy</span>
<span class="t" id="seven" style="left:1328.82px;top:887.01px;font-size:23.5px;color:#fd2c30;font-weight:bold;">7</span>
</div>
<!-- FOOTER -->
<div id="footer"></div>
<svg width="24" height="12" viewBox="0 0 24 12" style="left:1378px;top:1157.300px"><rect x=".6" y=".6" width="22.800" height="10.800" rx="1" fill="#fff" stroke="#6b7785" stroke-width="1.200"/><rect x=".6" y=".6" width="11.400" height="10.800" fill="#6b7785"/><path d="M4 9.300 L6.300 2.800 L8.600 9.300 M4.900 7.200 h2.800" stroke="#fff" stroke-width="1.300" fill="none"/><path d="M14.300 3.600 h7 M17.800 2.200 v1.400 M15 9.600 c2.800 -1 4.600 -3 5.200 -6 M15.800 5.400 c1 2 2.800 3.400 5 4.200" stroke="#6b7785" stroke-width="1.100" fill="none"/></svg>
<svg width="20" height="14" viewBox="0 0 20 14" style="left:1493.200px;top:1156.400px"><rect width="20" height="13.700" rx="1.300" fill="#da251d"/><path d="M10 3.600 l.95 2.450 l2.600 .1 l-2.050 1.600 l.75 2.500 l-2.250 -1.500 l-2.250 1.500 l.75 -2.500 l-2.050 -1.600 l2.600 -.1 z" fill="#ffea00"/></svg>
<svg width="20" height="19" viewBox="0 0 20 19" style="left:1623.500px;top:1153.500px" fill="none" stroke="#6b7785" stroke-width="1.700" stroke-linejoin="round" stroke-linecap="round"><path d="M13.300 1.300 l4.300 1 c.6 .15 1 .6 1 1.200 c0 7.800 -6.300 14.100 -14.100 14.100 c-.6 0 -1.100 -.4 -1.200 -1 l-1 -4.300 l4.500 -1.900 l2 2.400 c3 -1.400 4.500 -3.600 5.400 -5.400 l-2.400 -2 z" transform="translate(0.3 0)"/></svg>
<svg width="19" height="19" viewBox="0 0 19 19" style="left:1831.200px;top:1153.500px" fill="none" stroke="#6b7785" stroke-width="1.700"><circle cx="9.500" cy="9.500" r="8.300"/><path d="M6.900 7.400 a2.600 2.500 0 1 1 3.700 2.300 c-.8 .4 -1.100 .8 -1.100 1.700" stroke-width="1.900" stroke-linecap="round"/><circle cx="9.500" cy="14" r="1.150" fill="#6b7785" stroke="none"/></svg>
<svg width="22" height="19" viewBox="0 0 22 19" style="left:1951.500px;top:1153.500px" fill="none" stroke="#6b7785" stroke-width="1.700" stroke-linejoin="round" stroke-linecap="round"><path d="M14.500 11.500 v5 a1.500 1.500 0 0 1 -1.500 1.500 h-10.500 a1.500 1.500 0 0 1 -1.500 -1.500 v-11 a1.500 1.500 0 0 1 1.500 -1.500 h6.500"/><path d="M16.300 1.600 a1.700 1.700 0 0 1 2.400 0 l.9 .9 a1.700 1.700 0 0 1 0 2.400 l-8.500 8.500 l-4.100 .8 l.8 -4.100 z M14.600 3.300 l3.300 3.300"/></svg>
<svg width="6.900" height="6.900" viewBox="0 0 8 8" style="left:13.200px;top:1157.300px" fill="#c4314b"><circle cx="4" cy=".95" r=".95"/><circle cx="6.650" cy="2.450" r=".95"/><circle cx="6.650" cy="5.550" r=".95"/><circle cx="4" cy="7.050" r=".95"/><circle cx="1.350" cy="5.550" r=".95"/><circle cx="1.350" cy="2.450" r=".95"/><path d="M4 .95 L6.650 2.450 V5.550 L4 7.050 L1.350 5.550 V2.450 Z" fill="none" stroke="#c4314b" stroke-width=".9"/></svg>
<span class="t" style="left:20.600px;top:1157.800px;font-size:9.700px;font-weight:bold;color:#33b4d3;letter-spacing:-.35px">Ab<span style="color:#c8455e">i</span>s</span>
<span class="t" style="left:21.200px;top:1166.700px;font-size:2.400px;color:#8fd3e2;letter-spacing:.02px;font-weight:bold">English Academy</span>
<span class="t" id="f0" style="left:1407.44px;top:1155.02px;font-size:16.4px;color:#6b7785;letter-spacing:0.603px;">Ngôn ngữ:</span>
<span class="t" id="f1" style="left:1519.68px;top:1155.02px;font-size:16.4px;color:#6b7785;letter-spacing:0.380px;">Tiếng Việt</span>
<span class="t" id="f2" style="left:1651.70px;top:1155.02px;font-size:16.4px;color:#6b7785;letter-spacing:0.380px;">Bàn phím điện thoại</span>
<span class="t" id="f3" style="left:1861.34px;top:1155.02px;font-size:16.4px;color:#6b7785;letter-spacing:0.208px;">Trợ giúp</span>
<span class="t" id="f4" style="left:1982.94px;top:1155.02px;font-size:16.4px;color:#6b7785;letter-spacing:0.612px;">Hỗ trợ</span>
<!-- SCROLLBAR -->
<svg id="sbsvg" width="2048" height="1174" viewBox="0 0 2048 1174" style="left:0;top:0">
<rect x="2033" y="117.2" width="12" height="1023.8" fill="#f0f0f0"/>
<rect x="2033.2" y="358.8" width="11.8" height="782.2" fill="#aeaeae"/>
<rect x="2044.7" y="0" width="3.3" height="1174" fill="#383838"/>
</svg>
</body>
</html>
